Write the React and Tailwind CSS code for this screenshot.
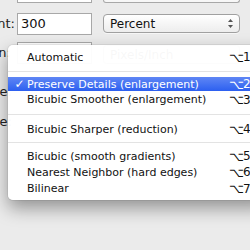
export default function App() {
  const font = { fontFamily: '"DejaVu Sans", "Liberation Sans", sans-serif' };
  const Sep = ({ h, lineAt }) => (
    <div className={`relative ${h}`}>
      <div className={`absolute left-0 right-0 h-px bg-[#e3e3e3] ${lineAt}`} />
    </div>
  );
  const Item = ({ label, sc, h, selected }) => (
    <div
      className={`flex items-center ${h} ${
        selected ? 'bg-gradient-to-b from-[#5f86f4] to-[#2c5ff0] text-white' : 'text-[#111]'
      }`}
    >
      <span className="w-[19px] text-center text-[12px] leading-none pl-[4px]">{selected ? '✓' : ''}</span>
      <span className="w-[202px] whitespace-nowrap text-[11px] leading-none">{label}</span>
      <span className="w-[14px] whitespace-nowrap text-[13px] leading-none">⌥</span>
      <span className="whitespace-nowrap text-[12px] leading-none">{sc}</span>
    </div>
  );
  return (
    <div className="relative w-[250px] h-[250px] overflow-hidden bg-[#ebebeb]" style={font}>
      {/* background dialog */}
      <div className="flex flex-col">
        <div className="flex h-[3px]">
          <div className="ml-[17px] w-[75px] h-[3px] bg-white border-b border-x border-[#a8a8a8]" />
          <div className="ml-[11px] w-[137px] h-[3px] bg-[#f7f7f7] border-b border-x border-[#a8a8a8] rounded-b-[4px]" />
        </div>
        <div className="flex mt-[10px] h-[22px]">
          <div className="w-[15px] flex justify-end items-center overflow-visible">
            <span className="whitespace-nowrap text-[13px] text-[#222]">Amount:</span>
          </div>
          <div className="ml-[2px] w-[75px] h-[22px] bg-white border border-[#a8a8a8] flex items-center pl-[3px] text-[13px] text-[#111]">
            300
          </div>
          <div className="ml-[11px] mt-[1px] w-[137px] h-[19px] rounded-[4px] border border-[#a0a0a0] bg-gradient-to-b from-white to-[#ededed] flex items-center pl-[6px] text-[12px] text-[#111] shadow-[0_1px_0_rgba(255,255,255,0.6)]">
            <span className="flex-1">Percent</span>
            <svg width="7" height="11" viewBox="0 0 7 11" className="mr-[5px]">
              <path d="M3.5 1 L6 4 L1 4 Z" fill="#555" />
              <path d="M3.5 10 L6 7 L1 7 Z" fill="#555" />
            </svg>
          </div>
        </div>
        <div className="flex mt-[7px] h-[22px]">
          <div className="w-[11px] flex justify-end items-center overflow-visible">
            <span className="whitespace-nowrap text-[13px] text-[#222]">Resolution:</span>
          </div>
          <div className="ml-[6px] w-[75px] h-[22px] bg-white border border-[#a8a8a8]" />
          <div className="ml-[11px] mt-[3px] w-[137px] h-[19px] rounded-[4px] border border-[#a0a0a0] bg-white flex items-center pl-[6px] text-[12px] text-[#111]">
            Pixels/Inch
          </div>
        </div>
        <div className="flex mt-[18px] h-[20px]">
          <div className="w-[12px] flex justify-end items-center overflow-visible">
            <span className="whitespace-nowrap text-[13px] text-[#222]">Resample:</span>
          </div>
        </div>
        <div className="flex mt-[10px] h-[20px]">
          <div className="w-[12px] flex justify-end items-center overflow-visible">
            <span className="whitespace-nowrap text-[13px] text-[#222]">Reduce Noise:</span>
          </div>
        </div>
      </div>

      {/* popup menu */}
      <div className="absolute left-[8px] top-[45px] w-[260px] rounded-[5px] bg-white/[0.97] shadow-[0_8px_18px_rgba(0,0,0,0.38),0_0_0_1px_rgba(0,0,0,0.06)] pt-[4px] pb-[3px] flex flex-col">
        <Item label="Automatic" sc="1" h="h-[16px]" />
        <Sep h="h-[12px]" lineAt="top-[6px]" />
        <Item label="Preserve Details (enlargement)" sc="2" h="h-[14px]" selected />
        <Item label="Bicubic Smoother (enlargement)" sc="3" h="h-[17px]" />
        <Sep h="h-[13px]" lineAt="top-[6px]" />
        <Item label="Bicubic Sharper (reduction)" sc="4" h="h-[16px]" />
        <Sep h="h-[11px]" lineAt="top-[5px]" />
        <Item label="Bicubic (smooth gradients)" sc="5" h="h-[16px]" />
        <Item label="Nearest Neighbor (hard edges)" sc="6" h="h-[16px]" />
        <Item label="Bilinear" sc="7" h="h-[17px]" />
      </div>
    </div>
  );
}
